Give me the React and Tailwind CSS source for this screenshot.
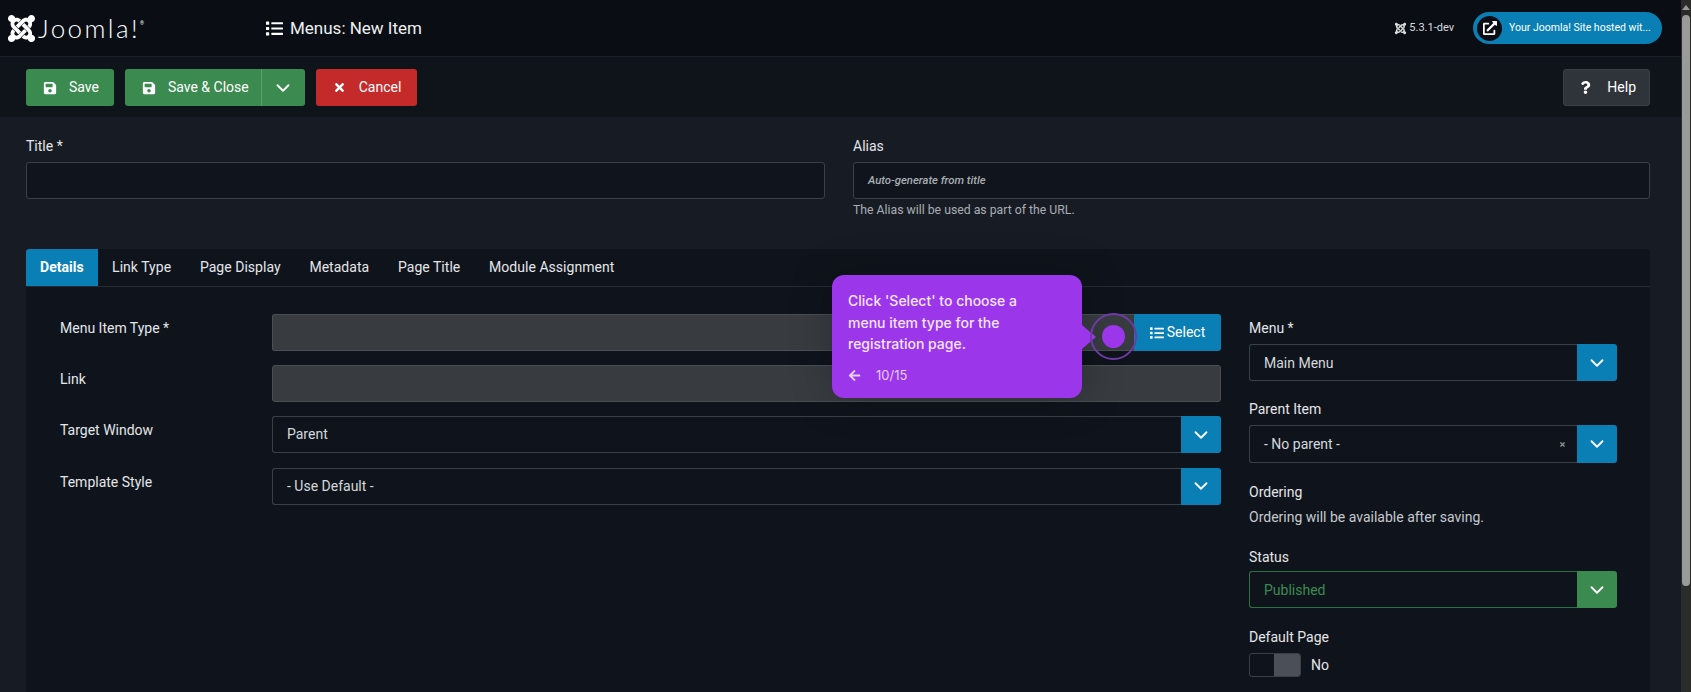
import { FaJoomla, FaSave, FaList, FaTimes, FaQuestion, FaExternalLinkAlt, FaArrowLeft } from 'react-icons/fa';
import { ChevronDown } from 'lucide-react';

const tabs = ['Details', 'Link Type', 'Page Display', 'Metadata', 'Page Title', 'Module Assignment'];

function Caret({ className = 'bg-[#0a7fb5]' }) {
  return (
    <div className={`w-[40px] h-full flex items-center justify-center rounded-r-[3px] text-white ${className}`}>
      <ChevronDown size={22} />
    </div>
  );
}

function Select({ value, height = 'h-[37px]', caret, text = 'text-[#d5d8dc]', border = 'border-[#3a4048]', children }) {
  return (
    <div className={`flex items-stretch ${height}`}>
      <div className={`flex-1 flex items-center pl-[14px] pr-[10px] border ${border} border-r-0 rounded-l-[3px] bg-[#0f141c] text-[14px] ${text}`}>
        <span className="flex-1">{value}</span>
        {children}
      </div>
      <Caret className={caret} />
    </div>
  );
}

function Row({ label, children }) {
  return (
    <div className="grid grid-cols-[212px_1fr] items-start">
      <label className="pt-[4px] text-[14px] leading-[20px] text-[#e4e6e9]">{label}</label>
      {children}
    </div>
  );
}

function Button({ icon, label, className }) {
  return (
    <button className={`h-[37px] flex items-center rounded-[3px] text-[14px] text-white ${className}`}>
      {icon}
      <span>{label}</span>
    </button>
  );
}

export default function App() {
  return (
    <div className="h-[692px] overflow-hidden flex bg-[#171c24] text-[#e4e6e9]" style={{ fontFamily: 'Roboto, sans-serif' }}>
      <div className="flex-1 min-w-0 relative">
        {/* Header */}
        <header className="h-[57px] bg-[#0a0e14] border-b border-[#1a1f27] flex items-center pr-[19px]">
          <div className="w-[266px] flex items-center pl-[6px] text-white">
            <FaJoomla className="w-[31px] h-[31px]" />
            <span className="ml-[1px] text-[26px] leading-none tracking-[2.4px]" style={{ fontFamily: 'Lato, sans-serif', fontWeight: 300 }}>
              Joomla!
            </span>
            <span className="self-start mt-[8px] text-[5px] leading-none">®</span>
          </div>
          <FaList className="w-[17px] h-[17px] text-white" />
          <h1 className="ml-[7px] pt-[1px] text-[17px] text-[#eef0f2]">Menus: New Item</h1>
          <div className="ml-auto flex items-center">
            <span className="flex items-center gap-[2px] text-[11px] text-[#d8dbde] mr-[19px]">
              <FaJoomla className="w-[13px] h-[13px]" />
              5.3.1-dev
            </span>
            <a className="w-[189px] h-[32px] rounded-full bg-[#0a7fb5] flex items-center pl-[4px] text-[10.5px] text-white">
              <span className="w-[25px] h-[25px] rounded-full bg-[#0a0e14] flex items-center justify-center">
                <FaExternalLinkAlt className="w-[14px] h-[14px]" />
              </span>
              <span className="ml-[7px]">Your Joomla! Site hosted wit...</span>
            </a>
          </div>
        </header>

        {/* Toolbar */}
        <div className="h-[60px] pt-[1px] bg-[#0f141b] flex items-center pl-[26px] pr-[31px]">
          <Button className="pl-[17px] pr-[15px] gap-[12px] bg-[#3b8b50]" icon={<FaSave className="w-[14px] h-[14px]" />} label="Save" />
          <div className="ml-[11px] h-[37px] flex rounded-[3px] bg-[#3b8b50]">
            <Button className="pl-[17px] pr-[12px] gap-[12px]" icon={<FaSave className="w-[14px] h-[14px]" />} label="Save & Close" />
            <div className="w-[44px] border-l border-[#56a06a] flex items-center justify-center text-white">
              <ChevronDown size={22} />
            </div>
          </div>
          <Button className="ml-[11px] pl-[17px] pr-[16px] gap-[13px] bg-[#c52a2a]" icon={<FaTimes className="w-[13px] h-[13px]" />} label="Cancel" />
          <Button className="ml-auto pl-[15px] pr-[13px] gap-[15px] bg-[#2f343b] border border-[#3a3f46]" icon={<FaQuestion className="w-[13px] h-[13px]" />} label="Help" />
        </div>

        {/* Title and alias */}
        <div className="h-[132px] pr-[31px] pl-[26px] pt-[19px] grid grid-cols-[799px_1fr] gap-x-[28px]">
          <div>
            <label className="block text-[14px] leading-[20px] mb-[6px]">Title *</label>
            <div className="h-[37px] border border-[#3a4048] rounded-[3px] bg-[#10151d]" />
          </div>
          <div>
            <label className="block text-[14px] leading-[20px] mb-[6px]">Alias</label>
            <div className="h-[37px] px-[14px] pt-[2px] flex items-center border border-[#3a4048] rounded-[3px] bg-[#10151d] text-[11.3px] font-medium italic text-[#a9aeb4]">
              Auto-generate from title
            </div>
            <p className="mt-[2px] text-[12.25px] leading-[18px] text-[#a9aeb4]">The Alias will be used as part of the URL.</p>
          </div>
        </div>

        {/* Tabs panel */}
        <div className="ml-[26px] mr-[31px] h-[500px] bg-[#0f141c] rounded-t-[3px]">
          <div className="h-[38px] flex border-b border-[#262b33] text-[14px] tracking-[0.03px]">
            {tabs.map((t, i) => (
              <div
                key={t}
                className={i === 0 ? 'px-[14px] flex items-center font-bold text-white bg-[#0a7fb5] rounded-tl-[3px]' : 'px-[14.4px] flex items-center text-[#e4e6e9]'}
              >
                {t}
              </div>
            ))}
          </div>

          <div className="pt-[27px] pl-[34px] pr-[33px] grid grid-cols-[1fr_368px] gap-x-[28px]">
            <div className="flex flex-col gap-[14.2px]">
              <Row label="Menu Item Type *">
                <div className="h-[37px] flex">
                  <div className="flex-1 border border-[#4a4f56] border-r-0 rounded-l-[3px] bg-[#383c41]" />
                  <div className="w-[87px] flex items-center justify-center gap-[3px] rounded-r-[3px] bg-[#0a7fb5] text-[14px] text-white">
                    <FaList className="w-[14px] h-[14px]" />
                    Select
                  </div>
                </div>
              </Row>
              <Row label="Link">
                <div className="h-[37px] border border-[#4a4f56] rounded-[3px] bg-[#383c41]" />
              </Row>
              <Row label="Target Window">
                <Select value="Parent" />
              </Row>
              <Row label="Template Style">
                <Select value="- Use Default -" />
              </Row>
            </div>

            <div className="pt-[4px] text-[14px] leading-[20px]">
              <label className="block mb-[6px]">Menu *</label>
              <Select value="Main Menu" />
              <label className="block mt-[18px] mb-[6px]">Parent Item</label>
              <Select value="- No parent -" height="h-[38px]">
                <FaTimes className="w-[7px] h-[7px] text-[#8d9298] mr-[1px]" />
              </Select>
              <label className="block mt-[19px]">Ordering</label>
              <p className="mt-[5px] text-[#c6c9cd]">Ordering will be available after saving.</p>
              <label className="block mt-[20px] mb-[4px]">Status</label>
              <Select value="Published" caret="bg-[#3b8b50]" text="text-[#3b8b50]" border="border-[#2f7040]" />
              <label className="block mt-[19px] mb-[6px]">Default Page</label>
              <div className="flex items-center gap-[10px]">
                <div className="w-[52px] h-[24px] border border-[#3a4048] rounded-[3px] overflow-hidden flex justify-end">
                  <div className="w-[26px] h-full bg-[#4b5058]" />
                </div>
                <span>No</span>
              </div>
            </div>
          </div>
        </div>

        {/* Guide tooltip */}
        <div className="absolute left-[832px] top-[275px] w-[250px] h-[123px] rounded-[12px] bg-[#9b36ea] px-[16px] pt-[15px] text-white shadow-[0_0_40px_rgba(0,0,0,0.25)]" style={{ fontFamily: 'Inter, sans-serif' }}>
          <p className="text-[14px] leading-[21.5px] font-medium text-[#f3e6fd]">
            Click 'Select' to choose a<br />menu item type for the<br />registration page.
          </p>
          <div className="mt-[11px] flex items-center gap-[15px] text-[13px] text-[#e6cffa]">
            <FaArrowLeft className="w-[13px] h-[13px]" />
            <span>10/15</span>
          </div>
        </div>
        <div className="absolute left-[1082px] top-[325px] w-0 h-0 border-y-[12px] border-y-transparent border-l-[14px] border-l-[#9b36ea]" />
        <div className="absolute left-[1090px] top-[313px] w-[47px] h-[47px] rounded-full border-2 border-[#6f3aa5] flex items-center justify-center">
          <div className="w-[23px] h-[23px] rounded-full bg-[#9b36ea]" />
        </div>
      </div>

      {/* Scrollbar */}
      <div className="w-[10px] bg-[#2b2b2b] flex flex-col items-center">
        <div className="mt-[5px] w-0 h-0 border-x-[4px] border-x-transparent border-b-[5px] border-b-[#9a9a9a]" />
        <div className="mt-[5px] w-[8px] h-[571px] rounded-full bg-[#9a9a9a]" />
      </div>
    </div>
  );
}
